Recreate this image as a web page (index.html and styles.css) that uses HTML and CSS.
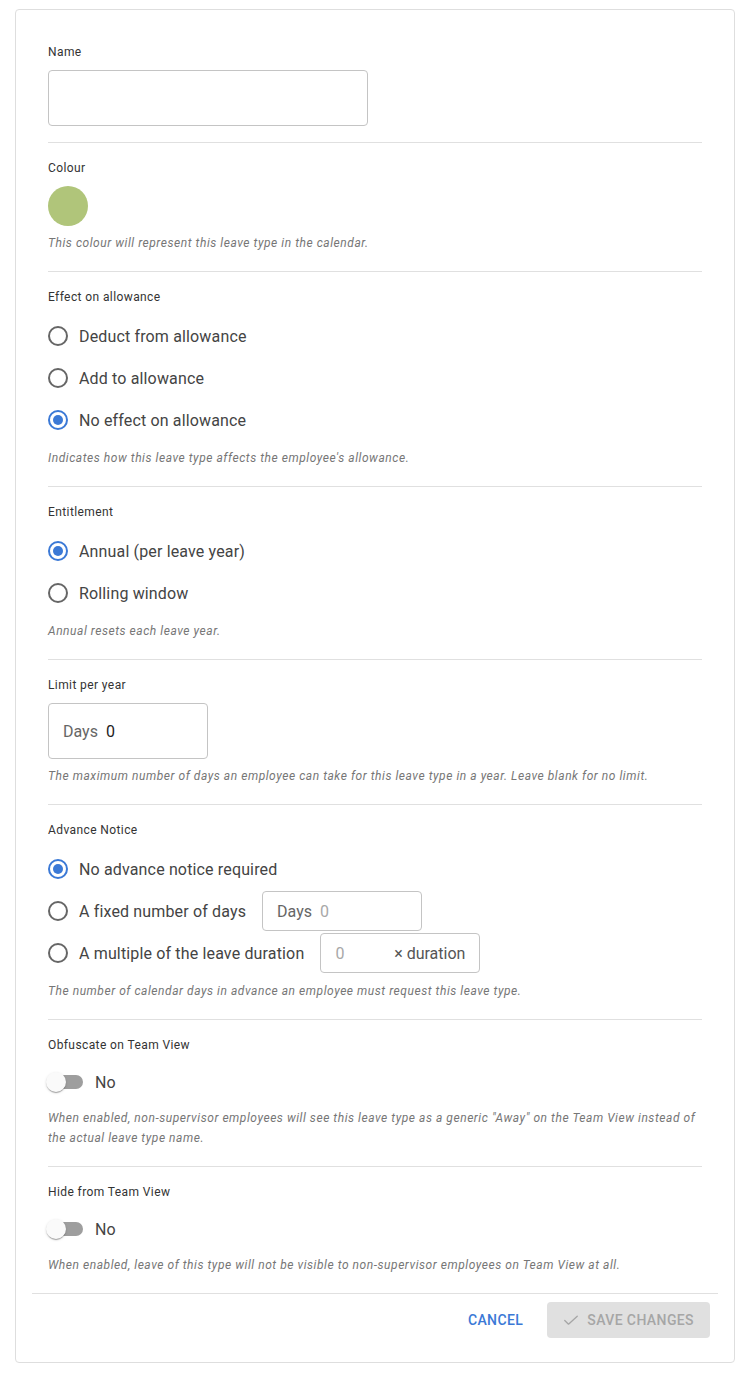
FILE: index.html
```html
<!DOCTYPE html>
<html lang="en">
<head>
    <meta charset="UTF-8">
    <meta name="viewport" content="width=device-width, initial-scale=1.0">
    <title>Edit leave type</title>
    <link rel="stylesheet" href="styles.css">
</head>
<body>
    <div class="card">
        <div class="card-body">
            <div class="section section-plain">
                <div class="field-label">Name</div>
                <div class="text-field name-field"><input type="text"></div>
            </div>

            <div class="section">
                <div class="field-label">Colour</div>
                <div class="swatch"></div>
                <div class="help">This colour will represent this leave type in the calendar.</div>
            </div>

            <div class="section">
                <div class="field-label">Effect on allowance</div>
                <div class="radio-row"><span class="radio"></span><span class="radio-text">Deduct from allowance</span></div>
                <div class="radio-row"><span class="radio"></span><span class="radio-text">Add to allowance</span></div>
                <div class="radio-row"><span class="radio checked"></span><span class="radio-text">No effect on allowance</span></div>
                <div class="help">Indicates how this leave type affects the employee's allowance.</div>
            </div>

            <div class="section">
                <div class="field-label">Entitlement</div>
                <div class="radio-row"><span class="radio checked"></span><span class="radio-text">Annual (per leave year)</span></div>
                <div class="radio-row"><span class="radio"></span><span class="radio-text">Rolling window</span></div>
                <div class="help">Annual resets each leave year.</div>
            </div>

            <div class="section">
                <div class="field-label">Limit per year</div>
                <div class="text-field limit-field">
                    <span class="adorn">Days</span>
                    <input type="text" value="0">
                </div>
                <div class="help">The maximum number of days an employee can take for this leave type in a year. Leave blank for no limit.</div>
            </div>

            <div class="section">
                <div class="field-label">Advance Notice</div>
                <div class="radio-row"><span class="radio checked"></span><span class="radio-text">No advance notice required</span></div>
                <div class="radio-row">
                    <span class="radio"></span><span class="radio-text">A fixed number of days</span>
                    <div class="text-field small-field">
                        <span class="adorn">Days</span>
                        <input type="text" placeholder="0">
                    </div>
                </div>
                <div class="radio-row">
                    <span class="radio"></span><span class="radio-text">A multiple of the leave duration</span>
                    <div class="text-field small-field">
                        <input type="text" placeholder="0">
                        <span class="adorn adorn-end">× duration</span>
                    </div>
                </div>
                <div class="help">The number of calendar days in advance an employee must request this leave type.</div>
            </div>

            <div class="section">
                <div class="field-label">Obfuscate on Team View</div>
                <div class="switch-row">
                    <span class="switch"><span class="track"></span><span class="thumb"></span></span>
                    <span class="switch-text">No</span>
                </div>
                <div class="help">When enabled, non-supervisor employees will see this leave type as a generic "Away" on the Team View instead of the actual leave type name.</div>
            </div>

            <div class="section">
                <div class="field-label">Hide from Team View</div>
                <div class="switch-row">
                    <span class="switch"><span class="track"></span><span class="thumb"></span></span>
                    <span class="switch-text">No</span>
                </div>
                <div class="help">When enabled, leave of this type will not be visible to non-supervisor employees on Team View at all.</div>
            </div>
        </div>

        <div class="card-actions">
            <button class="btn btn-text">Cancel</button>
            <button class="btn btn-save" disabled>
                <svg width="20" height="20" viewBox="0 0 24 24" fill="none" stroke="currentColor" stroke-width="1.6" stroke-linecap="round" stroke-linejoin="round"><polyline points="4.5 12.5 9 17 19.5 7.5"/></svg>
                Save changes
            </button>
        </div>
    </div>
</body>
</html>
```

FILE: styles.css
```css
* { box-sizing: border-box; }

body {
    margin: 0;
    padding: 9px 17px 26px 15px;
    font-family: Roboto, "Liberation Sans", sans-serif;
    color: rgba(0,0,0,0.87);
    background: #fff;
}

.card {
    border: 1px solid #dedede;
    border-radius: 4px;
    padding: 16px 16px 16px;
    background: #fff;
}

.card-body { padding: 0 16px; }

.section {
    padding: 15px 0 18px;
    border-bottom: 1px solid #e0e0e0;
}
.section-plain { padding-top: 16px; padding-bottom: 16px; }
.section:last-child { border-bottom: none; }

.field-label {
    font-size: 12px;
    line-height: 20px;
    letter-spacing: 0.4px;
    color: #333;
    margin-bottom: 8px;
}

.help {
    margin-top: 7px;
    font-size: 12px;
    line-height: 20px;
    font-style: italic;
    letter-spacing: 0.55px;
    color: #767676;
}

/* text fields */
.text-field {
    display: flex;
    align-items: center;
    border: 1px solid #c4c4c4;
    border-radius: 4px;
    padding: 0 14px;
    font-size: 16px;
    background: #fff;
}
.text-field input {
    border: none;
    outline: none;
    padding: 0;
    margin: 0;
    font: inherit;
    color: #222;
    min-width: 0;
    flex: 1;
    background: transparent;
}
.text-field input::placeholder { color: #a8a8a8; }
.name-field { width: 320px; height: 56px; }
.limit-field { width: 160px; height: 56px; }
.small-field { width: 160px; height: 40px; margin-left: 16px; }
.adorn { color: #666; margin-right: 8px; white-space: nowrap; }
.adorn-end { margin: 0 0 0 8px; color: #555; }

/* colour swatch */
.swatch {
    width: 40px;
    height: 40px;
    border-radius: 50%;
    background: #b0c57a;
}

/* radios */
.radio-row {
    display: flex;
    align-items: center;
    height: 42px;
}
.radio {
    width: 20px;
    height: 20px;
    margin-right: 11px;
    border: 2px solid #666;
    border-radius: 50%;
    display: flex;
    align-items: center;
    justify-content: center;
    flex: none;
}
.radio.checked { border-color: #3b79d6; }
.radio.checked::after {
    content: "";
    width: 10px;
    height: 10px;
    border-radius: 50%;
    background: #3b79d6;
}
.radio-text {
    font-size: 16px;
    color: #444;
    letter-spacing: 0.15px;
}

/* switches */
.switch-row {
    display: flex;
    align-items: center;
    height: 38px;
    margin-left: -11px;
}
.switch {
    position: relative;
    width: 58px;
    height: 38px;
    flex: none;
}
.track {
    position: absolute;
    left: 12px;
    top: 12px;
    width: 34px;
    height: 14px;
    border-radius: 7px;
    background: #9e9e9e;
}
.thumb {
    position: absolute;
    left: 9px;
    top: 9px;
    width: 20px;
    height: 20px;
    border-radius: 50%;
    background: #fafafa;
    box-shadow: 0 2px 1px -1px rgba(0,0,0,0.2), 0 1px 1px rgba(0,0,0,0.14), 0 1px 3px rgba(0,0,0,0.12);
}
.switch-text {
    font-size: 16px;
    color: #444;
}

/* footer */
.card-actions {
    display: flex;
    justify-content: flex-end;
    align-items: center;
    gap: 16px;
    padding: 8px;
    border-top: 1px solid #e0e0e0;
}
.btn {
    display: flex;
    align-items: center;
    height: 36px;
    border: none;
    border-radius: 4px;
    font-family: inherit;
    font-size: 14px;
    font-weight: 500;
    letter-spacing: 0.4px;
    text-transform: uppercase;
    background: transparent;
    cursor: pointer;
}
.btn-text {
    color: #3b79d6;
    padding: 6px 8px;
}
.btn-save {
    background: #e0e0e0;
    color: #a6a6a6;
    padding: 6px 16px 6px 14px;
    cursor: default;
}
.btn-save svg { margin-right: 6px; }
```
